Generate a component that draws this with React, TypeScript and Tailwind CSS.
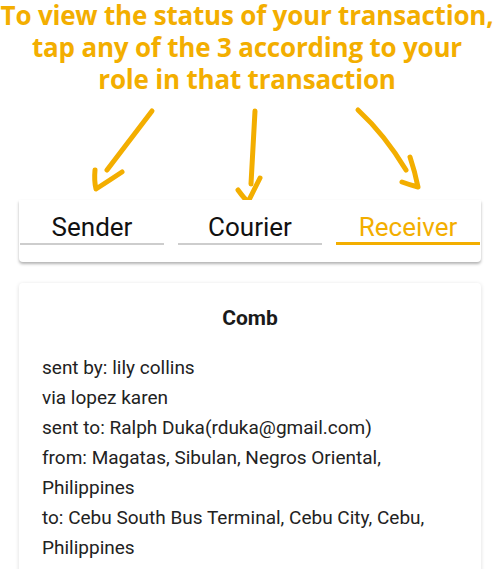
import React from 'react'

const ORANGE = '#f3ae00'

const TABS = [
  { label: 'Sender', active: false },
  { label: 'Courier', active: false },
  { label: 'Receiver', active: true }
]

const DETAILS = [
  'sent by: lily collins',
  'via lopez karen',
  'sent to: Ralph Duka(rduka@gmail.com)',
  'from: Magatas, Sibulan, Negros Oriental, Philippines',
  'to: Cebu South Bus Terminal, Cebu City, Cebu, Philippines'
]

const Arrows = () => (
  <svg width="494" height="105" viewBox="0 95 494 105" fill="none" className="block">
    <g stroke={ORANGE} strokeWidth="5" strokeLinecap="round" strokeLinejoin="round">
      {/* sender */}
      <path d="M152 111 Q130 140 107 170" />
      <path d="M95 170 Q94 181 96 189 Q110 180 122 172" />
      {/* courier */}
      <path d="M255 111 Q253 150 251 184" />
      <path d="M238 190 Q243 197 248 202 Q254 190 260 178" />
      {/* receiver */}
      <path d="M358 110 Q385 135 406 170" />
      <path d="M410 157 Q415 172 418 187 Q410 185 402 182" />
    </g>
  </svg>
)

export default function App() {
  return (
    <div className="w-full h-screen overflow-hidden bg-white" style={{ fontFamily: 'Roboto, sans-serif' }}>
      <h1
        className="mt-[-1px] text-center text-[26px] leading-[32px] font-bold tracking-[-0.2px] whitespace-nowrap"
        style={{ fontFamily: '"Open Sans", sans-serif', color: ORANGE }}
      >
        To view the status of your transaction,
        <br />
        tap any of the 3 according to your
        <br />
        role in that transaction
      </h1>
      <Arrows />
      <div className="ml-[19px] mr-[13px] bg-white pt-[12px] pb-[17px] rounded-b shadow-[0_2px_3px_rgba(0,0,0,0.3)]">
        <div className="grid grid-cols-3 gap-[14px] px-[1px]">
          {TABS.map((tab) => (
            <div key={tab.label} className="flex flex-col">
              <div
                className={`text-center text-[26px] leading-[30px] pb-[1px] ${tab.active ? 'text-[#f3ae00]' : 'text-[#111]'}`}
              >
                {tab.label}
              </div>
              {tab.active ? (
                <div className="h-[3px] -mt-[1px] bg-[#f3ae00]" />
              ) : (
                <div className="h-[2px] bg-[#cdcdcd]" />
              )}
            </div>
          ))}
        </div>
      </div>
      <div className="ml-[19px] mr-[13px] mt-[21px] bg-white rounded pt-[20px] pb-6 px-[23px] shadow-[0_1px_4px_rgba(0,0,0,0.14)]">
        <h2 className="text-center text-[21px] leading-[30px] font-bold text-[#1a1a1a] mb-[20px]">Comb</h2>
        {DETAILS.map((line) => (
          <p key={line} className="text-[19px] leading-[30px] text-[#222]">
            {line}
          </p>
        ))}
      </div>
    </div>
  )
}
